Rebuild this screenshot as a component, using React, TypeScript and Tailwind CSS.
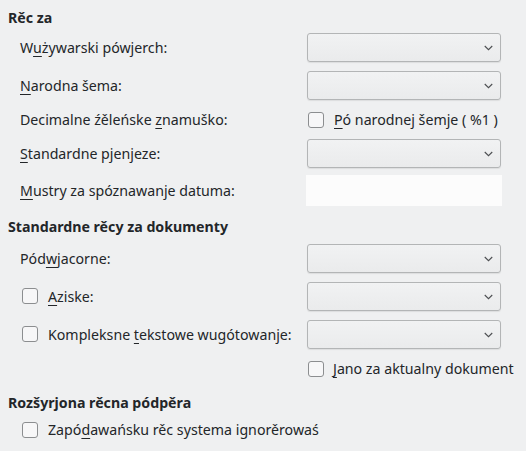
import React from "react";

const U = ({ children }: { children: React.ReactNode }) => (
  <span className="underline underline-offset-[3px] decoration-[1px]">{children}</span>
);

const Chevron = () => (
  <svg width="9" height="6" viewBox="0 0 9 6" className="absolute right-[7px] top-1/2 -translate-y-1/2">
    <path d="M0.75 1 L4.5 4.75 L8.25 1" fill="none" stroke="#4d4f52" strokeWidth="1.1" />
  </svg>
);

const Combo = () => (
  <div className="relative w-[194px] h-[29px] rounded-[3px] border border-[#b3b5b6] bg-gradient-to-b from-[#f1f2f3] to-[#eaebec] shadow-[0_1px_1px_rgba(0,0,0,0.08)] mr-[25px] ml-[1px]">
    <Chevron />
  </div>
);

const Check = () => (
  <div className="w-[16px] h-[16px] rounded-[3px] border border-[#8c8e90] bg-[#f7f7f8] shrink-0" />
);

const Heading = ({ children, cls }: { children: React.ReactNode; cls: string }) => (
  <div className={"pl-[8px] h-[20px] leading-[20px] font-bold " + cls}>{children}</div>
);

const Row = ({
  left,
  right,
  cls,
  h = "h-[29px]",
}: {
  left: React.ReactNode;
  right: React.ReactNode;
  cls: string;
  h?: string;
}) => (
  <div className={"flex items-center " + h + " " + cls}>
    <div className="flex-1 flex items-center pl-[20px] min-w-0 whitespace-nowrap">{left}</div>
    <div className="w-[220px] flex items-center">{right}</div>
  </div>
);

export default function App() {
  return (
    <div
      className="w-[526px] h-[451px] bg-[#eff0f1] text-[#232629] text-[14.2px] overflow-hidden"
      style={{ fontFamily: '"Noto Sans", "Open Sans", sans-serif' }}
    >
      <Heading cls="pt-0 mt-[8px]">Rěc za</Heading>
      <Row cls="mt-[5px]" left={<span>W<U>u</U>żywarski pówjerch:</span>} right={<Combo />} />
      <Row cls="mt-[9px]" left={<span><U>N</U>arodna šema:</span>} right={<Combo />} />
      <Row
        cls="mt-[8px]"
        h="h-[24px]"
        left={<span>Decimalne źěleńske <U>z</U>namuško:</span>}
        right={
          <div className="flex items-center ml-[2px]">
            <Check />
            <span className="ml-[10px] whitespace-nowrap"><U>P</U>ó narodnej šemje ( %1 )</span>
          </div>
        }
      />
      <Row cls="mt-[7px]" left={<span><U>S</U>tandardne pjenjeze:</span>} right={<Combo />} />
      <Row
        cls="mt-[7px]"
        h="h-[31px]"
        left={<span><U>M</U>ustry za spóznawanje datuma:</span>}
        right={<div className="w-[196px] h-[31px] bg-[#fcfcfc]" />}
      />
      <Heading cls="mt-[11px]">Standardne rěcy za dokumenty</Heading>
      <Row cls="mt-[7px]" left={<span>Pód<U>w</U>jacorne:</span>} right={<Combo />} />
      <Row
        cls="mt-[9px]"
        left={
          <div className="flex items-center ml-[2px]">
            <Check />
            <span className="ml-[10px]"><U>A</U>ziske:</span>
          </div>
        }
        right={<Combo />}
      />
      <Row
        cls="mt-[9px]"
        left={
          <div className="flex items-center ml-[2px]">
            <Check />
            <span className="ml-[10px]">Kompleksne <U>t</U>ekstowe wugótowanje:</span>
          </div>
        }
        right={<Combo />}
      />
      <Row
        cls="mt-[8px]"
        h="h-[24px]"
        left={<span />}
        right={
          <div className="flex items-center ml-[2px]">
            <Check />
            <span className="ml-[9px] whitespace-nowrap"><U>J</U>ano za aktualny dokument</span>
          </div>
        }
      />
      <Heading cls="mt-[12px]">Rozšyrjona rěcna pódpěra</Heading>
      <div className="flex items-center h-[24px] mt-[5px] pl-[22px]">
        <Check />
        <span className="ml-[10px]">Zapó<U>d</U>awańsku rěc systema ignorěrowaś</span>
      </div>
    </div>
  );
}
